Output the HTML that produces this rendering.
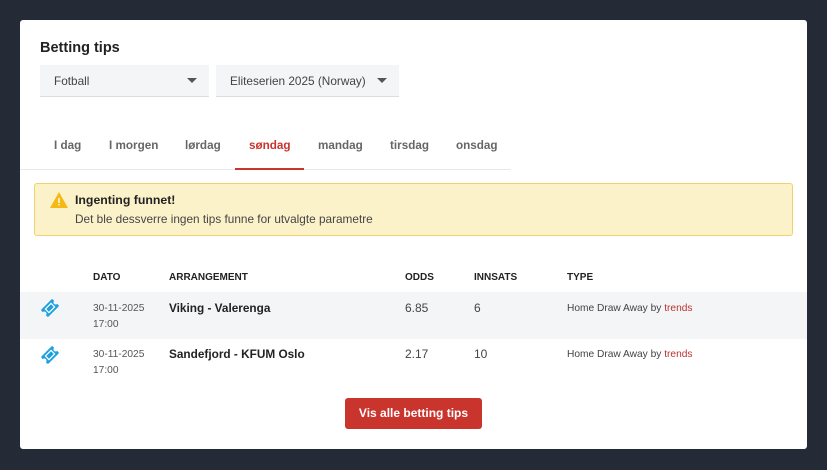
<!DOCTYPE html>
<html><head><meta charset="utf-8"><style>
*{margin:0;padding:0;box-sizing:border-box}
body{width:827px;height:470px;background:#252a37;font-family:"Liberation Sans",sans-serif;position:relative;overflow:hidden}
.card{position:absolute;left:20px;top:20px;width:787px;height:429px;background:#fff;border-radius:3px}
.a{position:absolute;white-space:nowrap}
.sel{position:absolute;top:45px;height:32px;background:#f4f5f6;border-bottom:1px solid #ddd;font-size:11.8px;color:#444;padding:9px 0 0 14px}
.sel i{position:absolute;top:13px;width:0;height:0;border-left:5px solid transparent;border-right:5px solid transparent;border-top:5px solid #555}
.tab{position:absolute;top:119px;font-size:11.7px;font-weight:bold;color:#666}
.th{position:absolute;top:252px;font-size:10px;font-weight:bold;color:#222}
.c{font-size:12px;color:#444}
.d{font-size:10.2px;color:#555;line-height:16px}
.b{font-size:11.8px;font-weight:bold;color:#222}
.t{font-size:10.2px;color:#444}
.t span{color:#b8342e}
</style></head><body>
<div class="card">
<div class="a" style="left:20px;top:20px;font-size:14.5px;font-weight:bold;color:#222">Betting tips</div>
<div class="sel" style="left:20px;width:169px">Fotball<i style="left:147px"></i></div>
<div class="sel" style="left:196px;width:183px">Eliteserien 2025 (Norway)<i style="left:161px"></i></div>
<div class="tab" style="left:34px">I dag</div>
<div class="tab" style="left:89px">I morgen</div>
<div class="tab" style="left:165px">lørdag</div>
<div class="tab" style="left:229px;color:#c9342d">søndag</div>
<div class="tab" style="left:298px">mandag</div>
<div class="tab" style="left:370px">tirsdag</div>
<div class="tab" style="left:436px">onsdag</div>
<div class="a" style="left:0;top:149px;width:491px;height:1px;background:#e8e8e8"></div>
<div class="a" style="left:215px;top:148px;width:69px;height:2px;background:#c9342d"></div>
<div class="a" style="left:14px;top:163px;width:759px;height:53px;background:#fcf2c9;border:1px solid #efd36a;border-radius:3px"></div>
<svg class="a" style="left:30px;top:172px" width="18" height="16" viewBox="0 0 18 16"><path d="M9 0L18 16H0Z" fill="#f5b915"/><rect x="8.3" y="6" width="1.4" height="5" fill="#fff"/><rect x="8.3" y="12" width="1.4" height="1.4" fill="#fff"/></svg>
<div class="a" style="left:55px;top:173px;font-size:12.3px;font-weight:bold;color:#222">Ingenting funnet!</div>
<div class="a" style="left:55px;top:192px;font-size:11.8px;color:#444">Det ble dessverre ingen tips funne for utvalgte parametre</div>
<div class="th" style="left:73px">DATO</div>
<div class="th" style="left:149px">ARRANGEMENT</div>
<div class="th" style="left:385px">ODDS</div>
<div class="th" style="left:454px">INNSATS</div>
<div class="th" style="left:547px">TYPE</div>
<div class="a" style="left:0;top:272px;width:787px;height:47px;background:#f4f5f7"></div>
<svg class="a" style="left:19px;top:277px" width="22" height="22" viewBox="0 0 22 22"><g transform="rotate(-45 11 11)"><rect x="3" y="6" width="16" height="10" rx="1" fill="#1e9fe0"/><circle cx="3" cy="11" r="2.2" fill="#f4f5f7"/><circle cx="19" cy="11" r="2.2" fill="#f4f5f7"/><rect x="7" y="8.5" width="8" height="5" fill="none" stroke="#fff" stroke-width="1.2"/></g></svg>
<div class="a d" style="left:73px;top:281px">30-11-2025<br>17:00</div>
<div class="a b" style="left:149px;top:281px">Viking - Valerenga</div>
<div class="a c" style="left:385px;top:281px">6.85</div>
<div class="a c" style="left:454px;top:281px">6</div>
<div class="a t" style="left:547px;top:283px">Home Draw Away by <span>trends</span></div>
<svg class="a" style="left:19px;top:324px" width="22" height="22" viewBox="0 0 22 22"><g transform="rotate(-45 11 11)"><rect x="3" y="6" width="16" height="10" rx="1" fill="#1e9fe0"/><circle cx="3" cy="11" r="2.2" fill="#fff"/><circle cx="19" cy="11" r="2.2" fill="#fff"/><rect x="7" y="8.5" width="8" height="5" fill="none" stroke="#fff" stroke-width="1.2"/></g></svg>
<div class="a d" style="left:73px;top:327px">30-11-2025<br>17:00</div>
<div class="a b" style="left:149px;top:327px">Sandefjord - KFUM Oslo</div>
<div class="a c" style="left:385px;top:327px">2.17</div>
<div class="a c" style="left:454px;top:327px">10</div>
<div class="a t" style="left:547px;top:329px">Home Draw Away by <span>trends</span></div>
<div class="a" style="left:325px;top:378px;width:137px;height:31px;background:#c9342d;border-radius:3px;color:#fff;font-size:12px;font-weight:bold;text-align:center;line-height:31px">Vis alle betting tips</div>
</div>
</body></html>
